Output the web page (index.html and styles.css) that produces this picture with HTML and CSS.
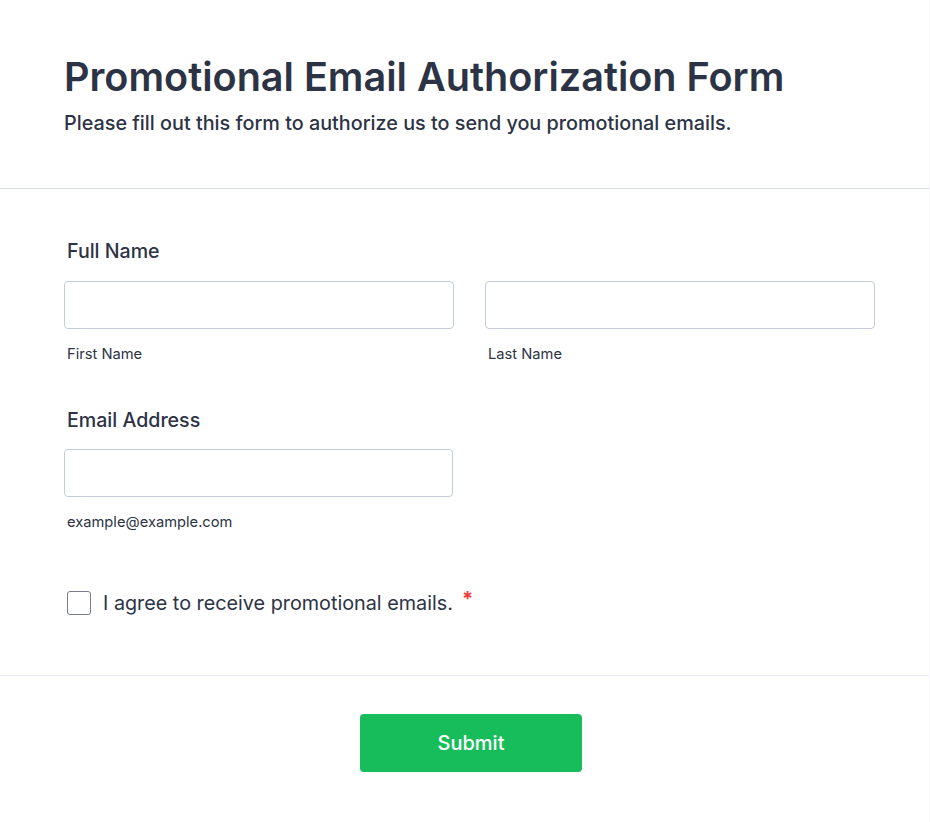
FILE: index.html
```html
<!DOCTYPE html>
<html lang="en">
<head>
<meta charset="utf-8">
<title>Promotional Email Authorization Form</title>
<link rel="stylesheet" href="styles.css">
</head>
<body>
<form class="form">
  <header class="form-header">
    <h1 class="form-title">Promotional Email Authorization Form</h1>
    <p class="form-subtitle">Please fill out this form to authorize us to send you promotional emails.</p>
  </header>
  <div class="form-body">
    <div class="field">
      <label class="field-label">Full Name</label>
      <div class="name-grid">
        <div class="sub-field">
          <input class="text-input" type="text">
          <span class="sub-label">First Name</span>
        </div>
        <div class="sub-field">
          <input class="text-input" type="text">
          <span class="sub-label">Last Name</span>
        </div>
      </div>
    </div>
    <div class="field field-email">
      <label class="field-label">Email Address</label>
      <div class="sub-field email-box">
        <input class="text-input" type="email">
        <span class="sub-label">example@example.com</span>
      </div>
    </div>
    <div class="check-row">
      <span class="checkbox"></span>
      <span class="check-text">I agree to receive promotional emails.</span>
      <span class="required">*</span>
    </div>
  </div>
  <div class="form-footer">
    <button class="submit-btn" type="button">Submit</button>
  </div>
</form>
</body>
</html>
```
FILE: styles.css
```css
* { box-sizing: border-box; }
html, body { margin: 0; padding: 0; }
body {
  background: #f7f7fb;
  font-family: Inter, "Noto Sans", sans-serif;
  color: #2c3345;
}
.form {
  width: 929px;
  min-height: 822px;
  background: #ffffff;
}
.form-header {
  padding: 52px 54px 53px 64px;
  border-bottom: 1px solid #d8dbea;
}
.form-title {
  margin: 0;
  font-size: 39.6px;
  line-height: 50px;
  font-weight: 600;
  color: #2c3345;
}
.form-subtitle {
  margin: 9px 0 0;
  font-size: 19.8px;
  line-height: 24px;
  font-weight: 500;
  color: #2c3345;
}
.form-body {
  padding: 48px 54px 57px 64px;
  border-bottom: 1px solid #eaecf5;
}
.field-label {
  display: block;
  padding-left: 3px;
  font-size: 19.6px;
  line-height: 28px;
  font-weight: 500;
}
.field-email { margin-top: 42px; }
.name-grid {
  display: grid;
  grid-template-columns: 1fr 1fr;
  column-gap: 31px;
  margin-top: 16px;
}
.sub-field {
  display: flex;
  flex-direction: column;
}
.email-box {
  width: 389px;
  margin-top: 15px;
}
.text-input {
  height: 48px;
  width: 100%;
  border: 1px solid #c3cad8;
  border-radius: 4px;
  background: #fff;
  margin: 0;
}
.sub-label {
  margin-top: 15px;
  padding-left: 3px;
  font-size: 14.7px;
  line-height: 20px;
  color: #2c3345;
}
.check-row {
  display: flex;
  align-items: center;
  margin-top: 56px;
  padding-left: 3px;
  height: 30px;
}
.checkbox {
  width: 24px;
  height: 24px;
  border: 1px solid #787c8f;
  border-radius: 3px;
  flex: none;
}
.check-text {
  margin-left: 12px;
  font-size: 19.8px;
  line-height: 30px;
}
.required {
  align-self: flex-start;
  margin-left: 9px;
  color: #f23a3c;
  font-size: 20px;
  font-weight: 700;
  line-height: 22px;
}
.form-footer {
  display: flex;
  justify-content: center;
  padding: 38px 0 0 13px;
}
.submit-btn {
  width: 222px;
  height: 58px;
  border: none;
  border-radius: 4px;
  background: #18bd5b;
  color: #ffffff;
  font-family: Inter, "Noto Sans", sans-serif;
  font-size: 20px;
  font-weight: 500;
}
```
